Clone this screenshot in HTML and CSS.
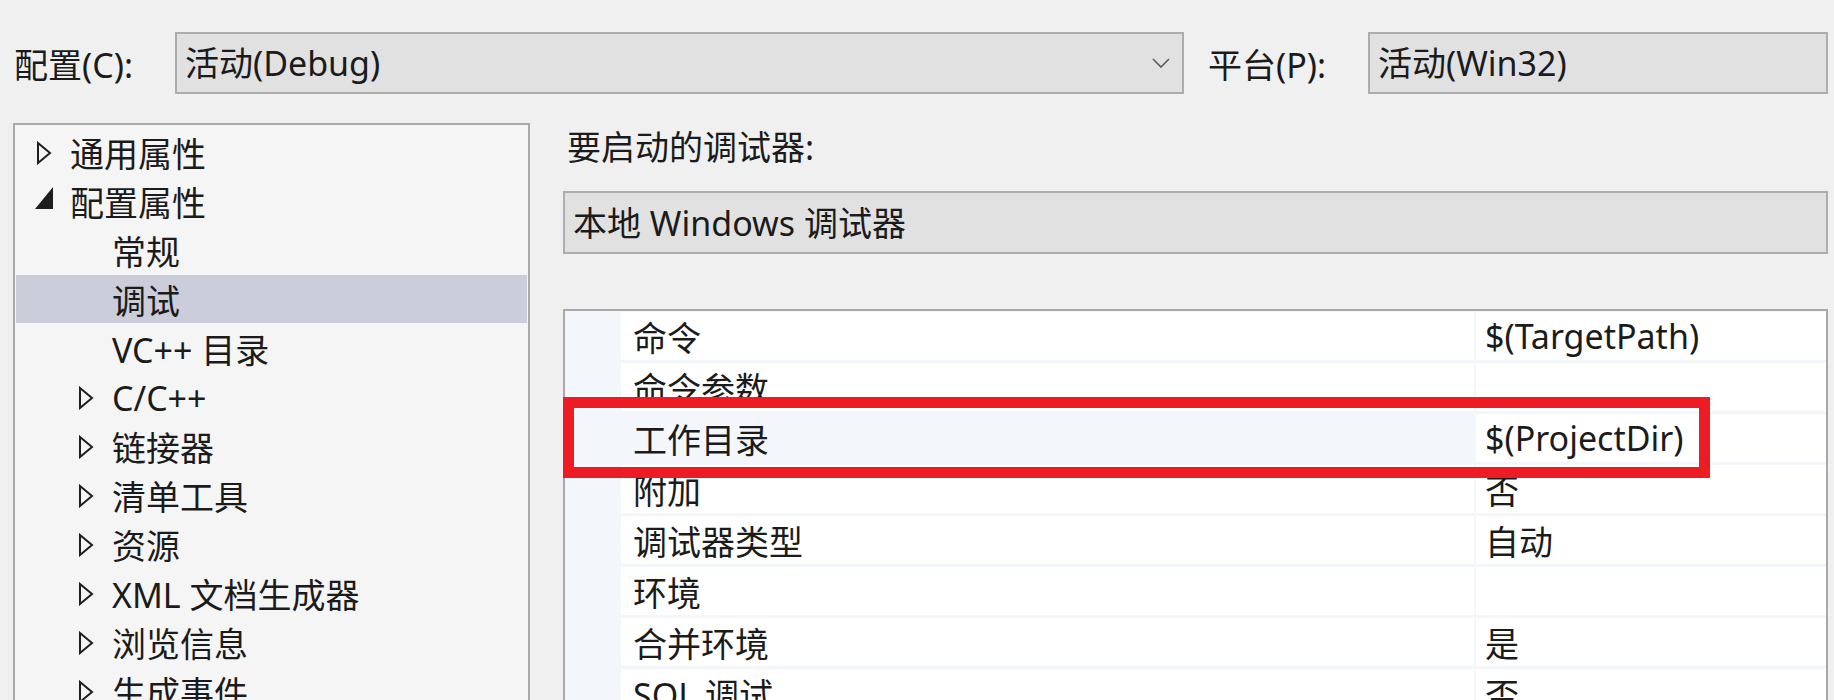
FILE: index.html
```html
<!DOCTYPE html>
<html lang="zh-CN">
<head>
<meta charset="utf-8">
<title>属性页</title>
<link rel="stylesheet" href="styles.css">
</head>
<body>
<div class="page">
  <div class="topbar">
    <div class="label lbl-config">配置(C):</div>
    <div class="combo combo-config">
      <span class="combo-text">活动(Debug)</span>
      <svg class="chevron" viewBox="0 0 18 10" width="18" height="10"><path d="M1 1 L9 9 L17 1" fill="none" stroke="#5a5a5a" stroke-width="1.6"/></svg>
    </div>
    <div class="label lbl-platform">平台(P):</div>
    <div class="combo combo-platform">
      <span class="combo-text">活动(Win32)</span>
    </div>
  </div>

  <div class="main">
    <div class="tree">
      <div class="item l0"><svg class="arrow" viewBox="0 0 18 24" width="18" height="24"><path d="M3 2 L15 12 L3 22 Z" fill="none" stroke="#1e1e1e" stroke-width="2" stroke-linejoin="miter"/></svg><span>通用属性</span></div>
      <div class="item l0"><svg class="arrow arrow-open" viewBox="0 0 18 22" width="18" height="22"><path d="M18 0 L18 22 L0 22 Z" fill="#1e1e1e"/></svg><span>配置属性</span></div>
      <div class="item l1"><span class="arrow-space"></span><span>常规</span></div>
      <div class="item l1 selected"><span class="arrow-space"></span><span>调试</span></div>
      <div class="item l1"><span class="arrow-space"></span><span>VC++ 目录</span></div>
      <div class="item l1"><svg class="arrow" viewBox="0 0 18 24" width="18" height="24"><path d="M3 2 L15 12 L3 22 Z" fill="none" stroke="#1e1e1e" stroke-width="2"/></svg><span>C/C++</span></div>
      <div class="item l1"><svg class="arrow" viewBox="0 0 18 24" width="18" height="24"><path d="M3 2 L15 12 L3 22 Z" fill="none" stroke="#1e1e1e" stroke-width="2"/></svg><span>链接器</span></div>
      <div class="item l1"><svg class="arrow" viewBox="0 0 18 24" width="18" height="24"><path d="M3 2 L15 12 L3 22 Z" fill="none" stroke="#1e1e1e" stroke-width="2"/></svg><span>清单工具</span></div>
      <div class="item l1"><svg class="arrow" viewBox="0 0 18 24" width="18" height="24"><path d="M3 2 L15 12 L3 22 Z" fill="none" stroke="#1e1e1e" stroke-width="2"/></svg><span>资源</span></div>
      <div class="item l1"><svg class="arrow" viewBox="0 0 18 24" width="18" height="24"><path d="M3 2 L15 12 L3 22 Z" fill="none" stroke="#1e1e1e" stroke-width="2"/></svg><span>XML 文档生成器</span></div>
      <div class="item l1"><svg class="arrow" viewBox="0 0 18 24" width="18" height="24"><path d="M3 2 L15 12 L3 22 Z" fill="none" stroke="#1e1e1e" stroke-width="2"/></svg><span>浏览信息</span></div>
      <div class="item l1"><svg class="arrow" viewBox="0 0 18 24" width="18" height="24"><path d="M3 2 L15 12 L3 22 Z" fill="none" stroke="#1e1e1e" stroke-width="2"/></svg><span>生成事件</span></div>
    </div>

    <div class="panel">
      <div class="panel-label">要启动的调试器:</div>
      <div class="combo combo-debugger">
        <span class="combo-text">本地 Windows 调试器</span>
      </div>
      <div class="grid">
        <div class="row"><div class="cell name">命令</div><div class="cell value">$(TargetPath)</div></div>
        <div class="row"><div class="cell name">命令参数</div><div class="cell value"></div></div>
        <div class="row selected"><div class="cell name">工作目录</div><div class="cell value">$(ProjectDir)</div></div>
        <div class="row"><div class="cell name">附加</div><div class="cell value">否</div></div>
        <div class="row"><div class="cell name">调试器类型</div><div class="cell value">自动</div></div>
        <div class="row"><div class="cell name">环境</div><div class="cell value"></div></div>
        <div class="row"><div class="cell name">合并环境</div><div class="cell value">是</div></div>
        <div class="row"><div class="cell name">SQL 调试</div><div class="cell value">否</div></div>
        <div class="highlight-box"></div>
      </div>
    </div>
  </div>
</div>
</body>
</html>
```

FILE: styles.css
```css
* { box-sizing: border-box; }

html, body {
  margin: 0;
  padding: 0;
  height: 700px;
  overflow: hidden;
  background: #f0f0f0;
}

body {
  font-family: "Noto Sans", "Noto Sans CJK SC", sans-serif;
  font-size: 34px;
  color: #1b1b1b;
}

.page {
  padding: 32px 6px 0 13px;
  height: 700px;
  display: flex;
  flex-direction: column;
}

.topbar {
  display: flex;
  align-items: center;
  height: 62px;
  flex-shrink: 0;
}

.label {
  white-space: nowrap;
}

.lbl-config {
  width: 162px;
  padding-left: 1px;
}

.lbl-platform {
  width: 184px;
  padding-left: 24px;
}

.combo {
  background: #e1e1e1;
  border: 2px solid #adadad;
  display: flex;
  align-items: center;
  white-space: nowrap;
  flex-shrink: 0;
}

.combo-config {
  width: 1009px;
  height: 62px;
  padding: 0 12px 0 8px;
  justify-content: space-between;
}

.combo-platform {
  flex: 1;
  height: 62px;
  padding-left: 8px;
}

.combo-text {
  line-height: 1;
}

.chevron {
  display: block;
}

.main {
  display: flex;
  margin-top: 29px;
  flex: 1;
  min-height: 0;
}

.tree {
  width: 517px;
  height: 700px;
  border: 2px solid #a9a9a9;
  background: #f5f5f5;
  padding-top: 3px;
  flex-shrink: 0;
}

.item {
  display: flex;
  align-items: center;
  height: 49px;
  white-space: nowrap;
  margin: 0 1px;
}

.item.l0 { padding-left: 19px; }
.item.l1 { padding-left: 61px; }

.item.selected {
  background: #cbcdda;
  height: 48px;
  margin-bottom: 1px;
}

.arrow, .arrow-space {
  width: 18px;
  flex-shrink: 0;
  display: block;
  margin-right: 17px;
}

.arrow-open {
  margin-top: -8px;
}

.arrow-space {
  height: 1px;
}

.panel {
  flex: 1;
  margin-left: 33px;
  display: flex;
  flex-direction: column;
  min-width: 0;
}

.panel-label {
  height: 44px;
  display: flex;
  align-items: center;
  padding-left: 4px;
  white-space: nowrap;
  flex-shrink: 0;
}

.combo-debugger {
  margin-top: 24px;
  height: 63px;
  padding-left: 8px;
}

.grid {
  position: relative;
  margin-top: 55px;
  border: 2px solid #a9a9a9;
  background: #f3f6fb;
  padding-top: 1px;
  height: 500px;
  flex-shrink: 0;
  display: flex;
  flex-direction: column;
  gap: 3px;
}

.row {
  display: flex;
  height: 48px;
  margin-left: 56px;
  gap: 2px;
  flex-shrink: 0;
}

.cell {
  background: #ffffff;
  display: flex;
  align-items: center;
  white-space: nowrap;
}

.cell.name {
  width: 853px;
  padding-left: 12px;
}

.cell.value {
  flex: 1;
  padding-left: 9px;
}

.row.selected .cell.name {
  background: #f3f6fb;
}

.highlight-box {
  position: absolute;
  left: -2px;
  top: 86px;
  width: 1147px;
  height: 81px;
  border: 11px solid #ed1c24;
  pointer-events: none;
}
```
